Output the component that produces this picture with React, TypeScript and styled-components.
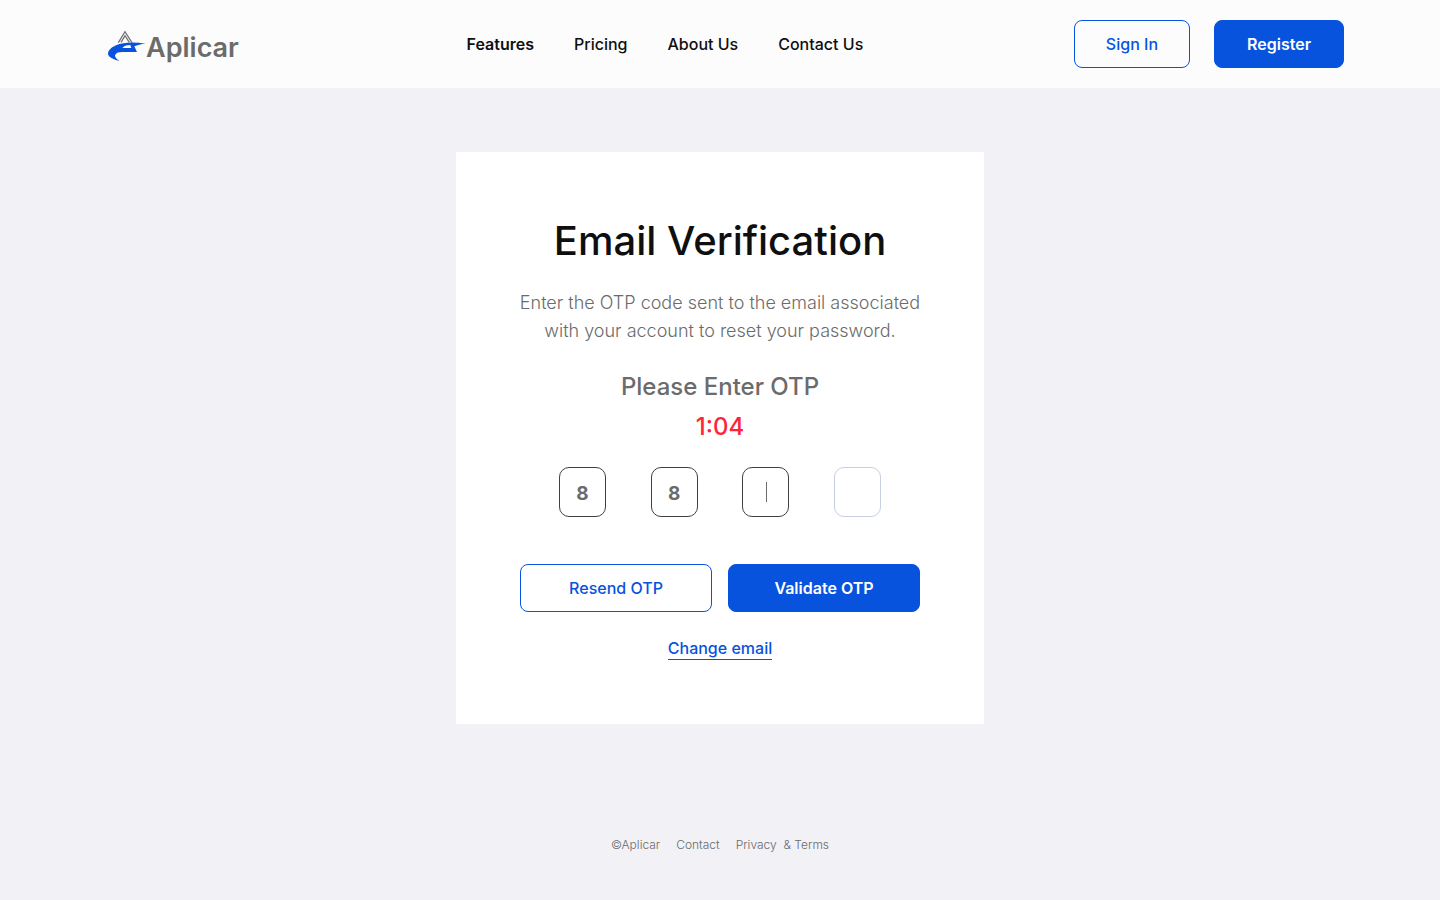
import React, { useState } from "react";
import styled, { createGlobalStyle, css } from "styled-components";

const color = {
  brand: "#0753dd",
  page: "#f2f1f6",
  header: "#fcfcfc",
  ink: "#0f0f0f",
  muted: "#6b6b6b",
  danger: "#ff2437",
  field: "#404040",
  fieldEmpty: "#c9cfe2",
};

const GlobalStyle = createGlobalStyle`
  *, *::before, *::after { box-sizing: border-box; }
  body {
    margin: 0;
    background: ${color.page};
    color: ${color.ink};
    font-family: Inter, "Liberation Sans", sans-serif;
    font-size: 16px;
    line-height: 24px;
  }
  a { color: inherit; text-decoration: none; }
  h1, h2, p { margin: 0; }
`;

const Page = styled.div`
  min-height: 100vh;
  display: flex;
  flex-direction: column;
`;

const Header = styled.header`
  display: flex;
  align-items: center;
  justify-content: space-between;
  gap: 24px;
  padding: 20px 96px;
  background: ${color.header};
`;

const Brand = styled.a`
  display: flex;
  align-items: center;
  width: 160px;
  height: 48px;
  padding: 6px 0 0 12px;
`;

const BrandName = styled.span`
  padding-top: 2px;
  color: ${color.muted};
  font-size: 27px;
  line-height: 32px;
  font-weight: 600;
`;

const Nav = styled.nav`
  display: flex;
  gap: 40px;
`;

const NavLink = styled.a<{ $active?: boolean }>`
  font-weight: ${(p) => (p.$active ? 600 : 500)};
  white-space: nowrap;
`;

const HeaderActions = styled.div`
  display: flex;
  gap: 24px;
`;

const Button = styled.button<{ $primary?: boolean }>`
  height: 48px;
  padding: 0 31px;
  border: 1px solid ${color.brand};
  border-radius: 8px;
  background: transparent;
  color: ${color.brand};
  font: inherit;
  font-weight: 500;
  white-space: nowrap;
  cursor: pointer;
  ${(p) =>
    p.$primary &&
    css`
      padding: 0 32px;
      background: ${color.brand};
      color: #ffffff;
      font-weight: 600;
    `}
`;

const Main = styled.main`
  flex: 1;
  display: flex;
  justify-content: center;
  align-items: flex-start;
  padding: 64px 24px;
`;

const Card = styled.form`
  display: flex;
  flex-direction: column;
  align-items: center;
  width: 100%;
  max-width: 528px;
  padding: 64px 56px;
  background: #ffffff;
  text-align: center;
`;

const Title = styled.h1`
  font-size: 40px;
  line-height: 50px;
  font-weight: 500;
`;

const Description = styled.p`
  margin-top: 23px;
  color: ${color.muted};
  font-size: 18px;
  line-height: 28px;
  font-weight: 300;
`;

const Prompt = styled.h2`
  margin-top: 24px;
  color: ${color.muted};
  font-size: 24px;
  line-height: 36px;
  font-weight: 500;
`;

const Timer = styled.p`
  margin-top: 4px;
  color: ${color.danger};
  font-size: 24px;
  line-height: 36px;
  font-weight: 500;
`;

const CodeRow = styled.div`
  display: flex;
  justify-content: space-between;
  width: 322px;
  margin-top: 22px;
`;

const CodeCell = styled.div<{ $caret?: boolean }>`
  position: relative;
  display: flex;
  ${(p) =>
    p.$caret &&
    css`
      &::after {
        content: "";
        position: absolute;
        top: 15px;
        left: 50%;
        width: 1px;
        height: 20px;
        background: ${color.muted};
        pointer-events: none;
      }
    `}
`;

const CodeInput = styled.input<{ $pending?: boolean }>`
  width: 47px;
  height: 50px;
  padding: 2px 0 0;
  border: 1px solid ${(p) => (p.$pending ? color.fieldEmpty : color.field)};
  border-radius: 10px;
  background: #ffffff;
  color: ${color.muted};
  caret-color: transparent;
  font: inherit;
  font-size: 19px;
  font-weight: 700;
  text-align: center;
  outline: none;
`;

const Actions = styled.div`
  display: grid;
  grid-template-columns: 1fr 1fr;
  gap: 16px;
  width: 100%;
  max-width: 400px;
  margin-top: 47px;
`;

const ChangeLink = styled.a`
  margin-top: 25px;
  border-bottom: 1px solid ${color.brand};
  color: ${color.brand};
  font-weight: 500;
  line-height: 22px;
`;

const Footer = styled.footer`
  display: flex;
  justify-content: center;
  gap: 16px;
  padding: 0 24px 47px;
  color: ${color.muted};
  font-size: 12px;
  line-height: 16px;
  font-weight: 300;
  white-space: pre;
`;

const LogoMark = () => (
  <svg width="38" height="34" viewBox="0 0 114 102" aria-hidden="true">
    <path
      d="M31 38 L51 5 L72 38 M39 37 L51 17 L64 37"
      fill="none"
      stroke="#747474"
      strokeWidth="4"
    />
    <path
      fillRule="evenodd"
      fill={color.brand}
      d="M113 41 C80 36 46 36 24 46 C6 54 -3 66 1 75 C5 84 19 89 35 93 C24 87 19 80 22 74 C25 68 32 66 42 66 L87 66 L79 49 C88 45 99 42 113 41 Z M43 54 C49 47 57 45 67 45 L70 54 Z"
    />
  </svg>
);

const navItems = ["Features", "Pricing", "About Us", "Contact Us"];

export default function App() {
  const [digits, setDigits] = useState(["8", "8", "", ""]);
  const next = digits.findIndex((d) => d === "");

  return (
    <>
      <GlobalStyle />
      <Page>
        <Header>
          <Brand href="#" aria-label="Aplicar">
            <LogoMark />
            <BrandName>Aplicar</BrandName>
          </Brand>
          <Nav>
            {navItems.map((item, i) => (
              <NavLink key={item} href="#" $active={i === 0}>
                {item}
              </NavLink>
            ))}
          </Nav>
          <HeaderActions>
            <Button type="button">Sign In</Button>
            <Button type="button" $primary>
              Register
            </Button>
          </HeaderActions>
        </Header>
        <Main>
          <Card onSubmit={(e) => e.preventDefault()}>
            <Title>Email Verification</Title>
            <Description>
              Enter the OTP code sent to the email associated with your account
              to reset your password.
            </Description>
            <Prompt>Please Enter OTP</Prompt>
            <Timer>1:04</Timer>
            <CodeRow role="group" aria-label="OTP code">
              {digits.map((digit, i) => (
                <CodeCell key={i} $caret={i === next}>
                  <CodeInput
                    aria-label={`Digit ${i + 1}`}
                    inputMode="numeric"
                    maxLength={1}
                    value={digit}
                    $pending={next !== -1 && i > next}
                    onChange={(e) =>
                      setDigits(
                        digits.map((d, j) => (j === i ? e.target.value : d))
                      )
                    }
                  />
                </CodeCell>
              ))}
            </CodeRow>
            <Actions>
              <Button type="button">Resend OTP</Button>
              <Button type="submit" $primary>
                Validate OTP
              </Button>
            </Actions>
            <ChangeLink href="#">Change email</ChangeLink>
          </Card>
        </Main>
        <Footer>
          <span>©Aplicar</span>
          <a href="#">Contact</a>
          <a href="#">{"Privacy  & Terms"}</a>
        </Footer>
      </Page>
    </>
  );
}
